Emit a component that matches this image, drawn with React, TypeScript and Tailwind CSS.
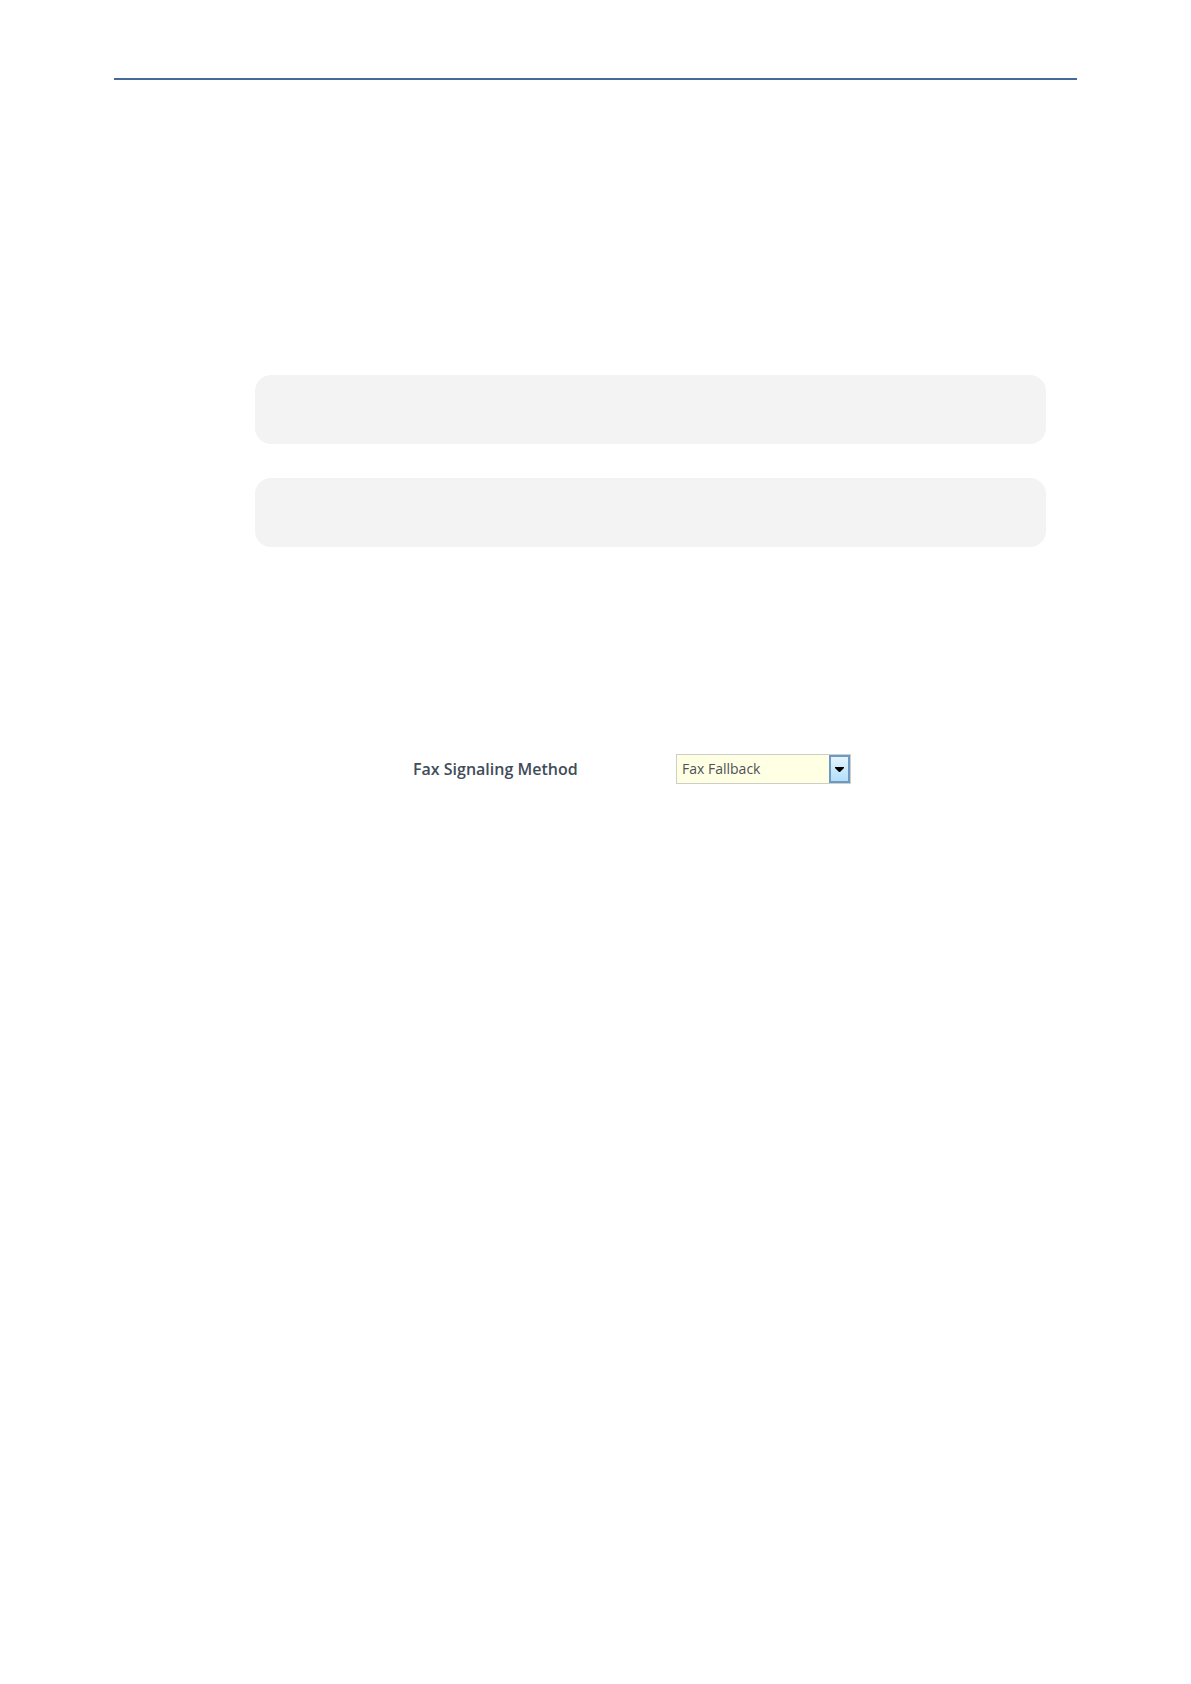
const FAX_METHODS = ["Fax Fallback", "T.38 Relay", "G.711 Transport", "No Fax"];

// Empty command blocks above the form
const CODE_BLOCKS = ["first", "second"];

function FaxSignalingField() {
  return (
    <div className="grid grid-cols-[263px_175px] items-center justify-start">
      <label
        htmlFor="fax-signaling"
        className="font-['Open_Sans',sans-serif] text-base leading-6 font-semibold text-[#414c58]"
      >
        Fax Signaling Method
      </label>
      <div className="relative">
        <select
          id="fax-signaling"
          defaultValue="Fax Fallback"
          className="block h-[30px] w-full appearance-none border border-[#cfcfc8] bg-[#ffffe3] pl-[5px] pr-6 font-['Open_Sans',sans-serif] text-sm text-[#505058]"
        >
          {FAX_METHODS.map((method) => (
            <option key={method}>{method}</option>
          ))}
        </select>
        {/* Arrow drawn over the native select */}
        <span className="pointer-events-none absolute inset-y-px right-px flex w-[21px] items-center justify-center border-2 border-[#6c9ac4] bg-linear-to-b from-[#e4f4fd] to-[#b2dffa]">
          <svg width="9" height="5" viewBox="0 0 9 5" className="fill-black">
            <path d="M0 0h9v1L5 5H4L0 1z" />
          </svg>
        </span>
      </div>
    </div>
  );
}

export default function App() {
  return (
    <div className="min-h-screen bg-white px-[114px] pt-[78px]">
      <hr className="h-[2px] border-0 bg-[#44699a]" />
      <main className="pt-[295px]">
        <div className="ml-[141px] mr-[31px] flex flex-col gap-[34px]">
          {CODE_BLOCKS.map((block) => (
            <div key={block} className="h-[69px] rounded-2xl bg-[#f3f3f3]" />
          ))}
        </div>
        <form className="ml-[299px] mt-[207px]">
          <FaxSignalingField />
        </form>
      </main>
    </div>
  );
}
